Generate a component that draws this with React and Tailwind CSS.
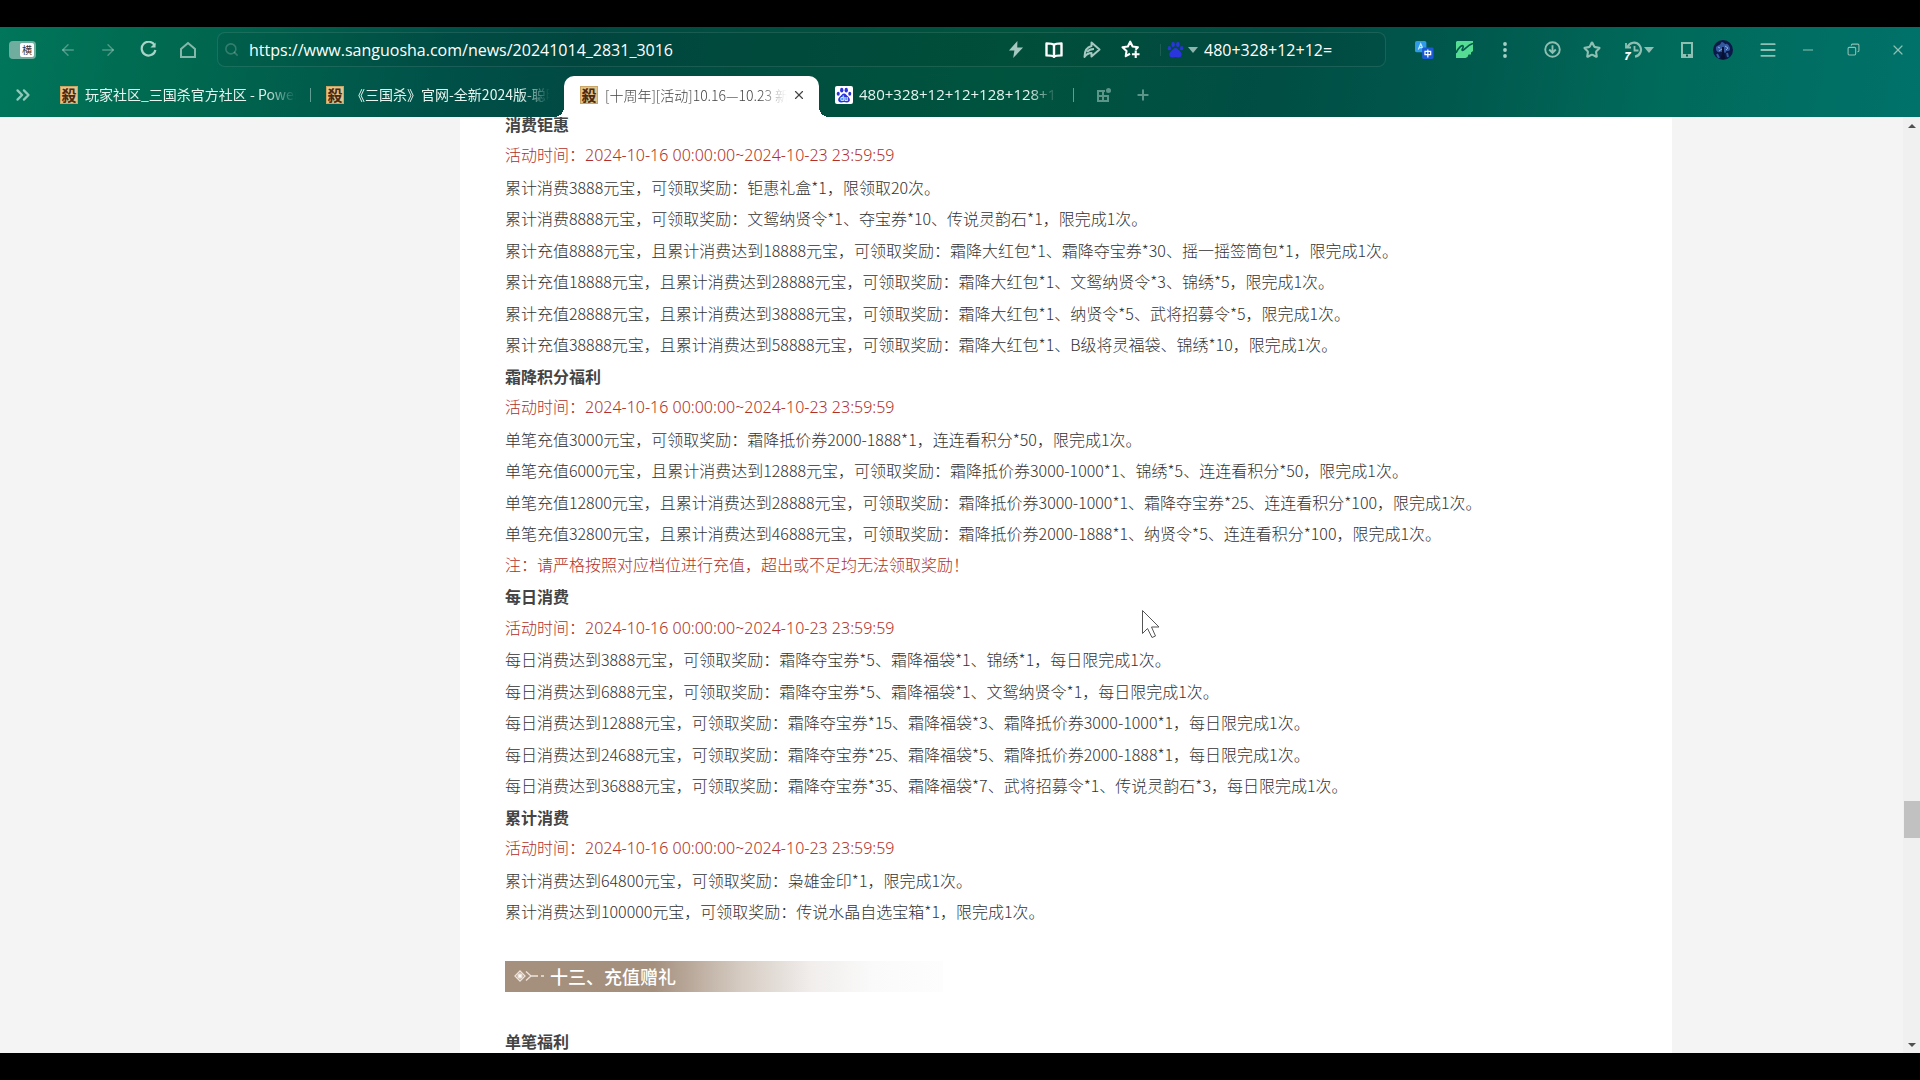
import { ArrowLeft, ArrowRight, ChevronsRight, Copy, Menu, Minus, Plus, Search, Star, X } from 'lucide-react';
import clsx from 'clsx';

const TIME = '活动时间：2024-10-16 00:00:00~2024-10-23 23:59:59';

const lines = [
  { type: 'title', text: '消费钜惠' },
  { type: 'red', text: TIME },
  { text: '累计消费3888元宝，可领取奖励：钜惠礼盒*1，限领取20次。' },
  { text: '累计消费8888元宝，可领取奖励：文鸳纳贤令*1、夺宝券*10、传说灵韵石*1，限完成1次。' },
  { text: '累计充值8888元宝，且累计消费达到18888元宝，可领取奖励：霜降大红包*1、霜降夺宝券*30、摇一摇签筒包*1，限完成1次。' },
  { text: '累计充值18888元宝，且累计消费达到28888元宝，可领取奖励：霜降大红包*1、文鸳纳贤令*3、锦绣*5，限完成1次。' },
  { text: '累计充值28888元宝，且累计消费达到38888元宝，可领取奖励：霜降大红包*1、纳贤令*5、武将招募令*5，限完成1次。' },
  { text: '累计充值38888元宝，且累计消费达到58888元宝，可领取奖励：霜降大红包*1、B级将灵福袋、锦绣*10，限完成1次。' },
  { type: 'title', text: '霜降积分福利' },
  { type: 'red', text: TIME },
  { text: '单笔充值3000元宝，可领取奖励：霜降抵价券2000-1888*1，连连看积分*50，限完成1次。' },
  { text: '单笔充值6000元宝，且累计消费达到12888元宝，可领取奖励：霜降抵价券3000-1000*1、锦绣*5、连连看积分*50，限完成1次。' },
  { text: '单笔充值12800元宝，且累计消费达到28888元宝，可领取奖励：霜降抵价券3000-1000*1、霜降夺宝券*25、连连看积分*100，限完成1次。' },
  { text: '单笔充值32800元宝，且累计消费达到46888元宝，可领取奖励：霜降抵价券2000-1888*1、纳贤令*5、连连看积分*100，限完成1次。' },
  { type: 'red', text: '注：请严格按照对应档位进行充值，超出或不足均无法领取奖励！' },
  { type: 'title', text: '每日消费' },
  { type: 'red', text: TIME },
  { text: '每日消费达到3888元宝，可领取奖励：霜降夺宝券*5、霜降福袋*1、锦绣*1，每日限完成1次。' },
  { text: '每日消费达到6888元宝，可领取奖励：霜降夺宝券*5、霜降福袋*1、文鸳纳贤令*1，每日限完成1次。' },
  { text: '每日消费达到12888元宝，可领取奖励：霜降夺宝券*15、霜降福袋*3、霜降抵价券3000-1000*1，每日限完成1次。' },
  { text: '每日消费达到24688元宝，可领取奖励：霜降夺宝券*25、霜降福袋*5、霜降抵价券2000-1888*1，每日限完成1次。' },
  { text: '每日消费达到36888元宝，可领取奖励：霜降夺宝券*35、霜降福袋*7、武将招募令*1、传说灵韵石*3，每日限完成1次。' },
  { type: 'title', text: '累计消费' },
  { type: 'red', text: TIME },
  { text: '累计消费达到64800元宝，可领取奖励：枭雄金印*1，限完成1次。' },
  { text: '累计消费达到100000元宝，可领取奖励：传说水晶自选宝箱*1，限完成1次。' },
];

const lineStyles = {
  title: 'font-bold text-[#444]',
  red: "font-['Noto_Sans','Noto_Sans_CJK_SC',sans-serif] font-light text-[#b03028]",
  body: 'font-light text-[#333]',
};

function IconButton({ label, className = 'w-10', children }) {
  return (
    <button aria-label={label} className={clsx('flex h-8 shrink-0 items-center justify-center', className)}>
      {children}
    </button>
  );
}

function Caret() {
  return (
    <svg viewBox="0 0 10 6" className="h-[6px] w-[10px]" fill="currentColor">
      <path d="M0 0h10L5 6z" />
    </svg>
  );
}

function Paw({ className, text }) {
  return (
    <svg viewBox="0 0 20 20" className={className} fill="currentColor">
      <ellipse cx="7.2" cy="4" rx="2.1" ry="3" />
      <ellipse cx="12.8" cy="4" rx="2.1" ry="3" />
      <ellipse cx="2.8" cy="8.4" rx="1.9" ry="2.6" />
      <ellipse cx="17.2" cy="8.4" rx="1.9" ry="2.6" />
      <path d="M10 8.2c2 0 2.8 1.5 4 2.8 1.3 1.3 3.3 2.6 3.3 5 0 2.3-1.7 3.3-3.6 3.3-1.4 0-2.3-.4-3.7-.4s-2.3.4-3.7.4c-1.9 0-3.6-1-3.6-3.3 0-2.4 2-3.7 3.3-5C7.2 9.7 8 8.2 10 8.2z" />
      {text && (
        <text x="10" y="17.5" textAnchor="middle" fontSize="8" fontWeight="700" fill="#fff">
          du
        </text>
      )}
    </svg>
  );
}

function ShaIcon() {
  return (
    <span className="flex size-[18px] shrink-0 items-center justify-center border border-[#c9a566] bg-[#e2c389] text-[15px] leading-none font-bold text-[#4a2a10]">
      殺
    </span>
  );
}

function BaiduIcon() {
  return (
    <span className="flex size-[18px] shrink-0 items-center justify-center rounded-xs bg-white text-[#2b32dc]">
      <Paw className="size-4" text />
    </span>
  );
}

function TabLabel({ className = 'pb-[2px]', children }) {
  return (
    <span
      className={clsx(
        'min-w-0 flex-1 overflow-hidden text-left whitespace-nowrap [mask-image:linear-gradient(to_right,#000_85%,transparent)]',
        className,
      )}
    >
      {children}
    </span>
  );
}

function AddressBar() {
  return (
    <div className="ml-[9px] flex h-[35px] min-w-0 flex-1 items-center rounded-lg border border-white/10 bg-black/5">
      <Search className="ml-[6px] size-[15px] shrink-0 text-white/20" strokeWidth={2.5} />
      <input
        aria-label="地址"
        defaultValue="https://www.sanguosha.com/news/20241014_2831_3016"
        className="ml-[10px] h-8 min-w-0 flex-1 bg-transparent font-['Open_Sans','Noto_Sans_CJK_SC',sans-serif] text-base font-medium text-white outline-none"
      />
      <IconButton label="极速" className="w-[38px] text-[#a5c8c0]">
        <svg viewBox="0 0 16 18" className="h-[17px] w-[16px]" fill="currentColor">
          <path d="M9.5 0L.5 10h5.8L5 18l10.5-11H9.3z" />
        </svg>
      </IconButton>
      <IconButton label="阅读模式" className="w-[38px] text-white">
        <svg viewBox="0 0 18 16" className="h-4 w-[18px]" fill="none" stroke="currentColor" strokeWidth="2.4" strokeLinejoin="round">
          <path d="M9 3C7.5 1.5 5 1.4 1.5 1.4v12C5 13.4 7.5 13.4 9 14.8c1.5-1.4 4-1.4 7.5-1.4v-12C13 1.4 10.5 1.5 9 3zM9 3v11.5" />
        </svg>
      </IconButton>
      <IconButton label="分享" className="w-[38px] text-[#a5c8c0]">
        <svg viewBox="0 0 18 18" className="size-[18px]" fill="none" stroke="currentColor" strokeWidth="2" strokeLinejoin="round">
          <path d="M8.5 5V1.5L16.5 8.5 8.5 15.5V12C5 12 3.5 13 1.5 16 1.5 10 4 6 8.5 5z" />
          <path d="M4 11c2-2.5 4-3 7-3" />
        </svg>
      </IconButton>
      <IconButton label="收藏" className="w-[38px] text-white">
        <svg viewBox="0 0 20 20" className="size-[19px]" fill="none" stroke="currentColor" strokeWidth="2.2">
          <path d="M9.5 14.5l-4.5 2.5.8-5.3L1.6 7.6l5.6-.8L9.7 1.8l2.5 5 5.6.8-2.6 2.6" strokeLinejoin="round" />
          <path d="M15.5 11v8M11.5 15h8" />
        </svg>
      </IconButton>
      <span className="ml-[11px] h-3 w-px bg-white/10" />
      <button aria-label="搜索引擎" className="flex w-[43px] shrink-0 items-center justify-center gap-1 text-[#8bb5ad]">
        <Paw className="size-[17px] text-[#2a35dd]" />
        <Caret />
      </button>
      <input
        aria-label="搜索"
        defaultValue="480+328+12+12="
        className="h-8 w-[181px] bg-transparent font-['Open_Sans','Noto_Sans_CJK_SC',sans-serif] text-base font-medium text-white outline-none"
      />
    </div>
  );
}

function Toolbar() {
  return (
    <div className="flex h-[45px] items-center text-[#8fbfb3]">
      <button className="ml-[9px] flex h-[18px] w-[27px] shrink-0 items-center justify-end rounded-sm bg-[#6fae9f] p-[2px]">
        <span className="flex h-[14px] w-[14px] items-center justify-center rounded-xs bg-white text-[10px] leading-none text-[#333]">
          横
        </span>
      </button>
      <div className="ml-[12px] flex">
        <IconButton label="后退">
          <ArrowLeft className="size-[18px] text-white/30" />
        </IconButton>
        <IconButton label="前进">
          <ArrowRight className="size-[18px] text-white/30" />
        </IconButton>
        <IconButton label="刷新">
          <svg viewBox="0 0 18 18" className="size-[17px]" fill="none" stroke="#a8d3c8" strokeWidth="2.3">
            <path d="M15.5 4.5A7.3 7.3 0 1 0 16.3 9.5" />
            <path d="M16.5 1.5V7H11z" fill="#a8d3c8" stroke="none" />
          </svg>
        </IconButton>
        <IconButton label="主页">
          <svg viewBox="0 0 18 18" className="size-[18px]" fill="none" stroke="#85b8ab" strokeWidth="2">
            <path d="M2 8L9 2l7 6v8H2z" />
          </svg>
        </IconButton>
      </div>

      <AddressBar />

      <div className="mr-[2px] ml-[18px] flex shrink-0 items-center">
        <IconButton label="翻译">
          <svg viewBox="0 0 20 20" className="size-[19px]">
            <rect x="0" y="1" width="12" height="12" rx="2" fill="#2f9be8" />
            <path d="M3.5 10L6 4l2 4.5M4.5 8h3" stroke="#c8e8ff" strokeWidth="1.3" fill="none" />
            <rect x="7.5" y="8" width="12" height="12" rx="1.5" fill="#1d5bd6" />
            <path d="M10.5 12h6v3.5h-6zM13.5 10v8.5" stroke="#fff" strokeWidth="1.3" fill="none" />
          </svg>
        </IconButton>
        <IconButton label="扩展">
          <svg viewBox="0 0 17 17" className="size-[17px]">
            <path d="M1 0h16v10l-2 1.5v2h-2.5L11.5 16l-2 1H0V1z" fill="#55de93" />
            <path d="M0 12C2 7 6 3.5 7 5s-2 4-.5 4.5S11 4 17 2.5" stroke="#00594d" strokeWidth="1.6" fill="none" />
          </svg>
        </IconButton>
        <IconButton label="更多" className="w-[42px]">
          <svg viewBox="0 0 4 16" className="h-4 w-1" fill="#a5d0c6">
            <circle cx="2" cy="2" r="1.9" />
            <circle cx="2" cy="8" r="1.9" />
            <circle cx="2" cy="14" r="1.9" />
          </svg>
        </IconButton>
        <IconButton label="下载" className="ml-[6px] w-10">
          <svg viewBox="0 0 18 18" className="size-[17px]" fill="none" stroke="currentColor" strokeWidth="2">
            <circle cx="9" cy="9" r="7.7" />
            <path d="M9 4.5v8M5.5 9L9 12.5 12.5 9" />
          </svg>
        </IconButton>
        <IconButton label="收藏夹">
          <Star className="size-[18px]" strokeWidth={2.8} strokeLinejoin="miter" />
        </IconButton>
        <button aria-label="历史记录" className="flex w-[52px] shrink-0 items-center justify-center gap-px">
          <svg viewBox="0 0 20 20" className="size-[20px]" fill="none" stroke="currentColor" strokeWidth="2.2">
            <path d="M4.5 7a7 7 0 1 1 7.5 9.6" />
            <path d="M3 3v4.5h5M11.5 6v4.5h4" strokeWidth="1.8" />
            <text x="0" y="20" fontSize="11" fontWeight="900" fontStyle="italic" fill="#fff" stroke="none">
              7
            </text>
          </svg>
          <Caret />
        </button>
        <IconButton label="手机" className="ml-[5px] w-9">
          <svg viewBox="0 0 12 16" className="h-4 w-3" fill="none" stroke="currentColor" strokeWidth="2">
            <path d="M1 1h10v14H1z" />
            <path d="M1 13.5h10" strokeWidth="3" />
            <path d="M5 13.5h2" stroke="#00594d" />
          </svg>
        </IconButton>
        <IconButton label="账户" className="w-9">
          <svg viewBox="0 0 20 20" className="size-5 rounded-full">
            <rect width="20" height="20" fill="#0b1a48" />
            <path d="M3 9C2 5 7 6 8 3s4 2 5 1 4 2 4 5-4 1-4 3-4-1-6 0-4-1-4-3z" fill="#335a9e" />
            <path d="M5 7l2 1M12 6l3 2M6 11l3-2M13 10l2-2" stroke="#86a9dc" />
            <path d="M9 7h2v6l1.5 6h-5L9 14z" fill="#081033" />
            <path d="M4 14l2 4M14 13l1 4" stroke="#2d62a4" strokeWidth="2" />
          </svg>
        </IconButton>
        <IconButton label="菜单" className="ml-[7px] w-10">
          <Menu className="size-[20px]" strokeWidth={2.2} />
        </IconButton>
        <IconButton label="最小化">
          <Minus className="size-4" strokeWidth={1.5} />
        </IconButton>
        <IconButton label="还原" className="ml-[5px] w-10">
          <Copy className="size-[13px] rotate-90" strokeWidth={2} />
        </IconButton>
        <IconButton label="关闭" className="ml-[5px] w-10">
          <X className="size-[16px]" strokeWidth={1.8} />
        </IconButton>
      </div>
    </div>
  );
}

function TabStrip() {
  return (
    <nav className="flex h-[45px] items-end text-sm text-[#e6f5f0]">
      <IconButton label="展开标签" className="h-[45px] w-[46px]">
        <ChevronsRight className="size-[22px] text-[#8fc9ba]" strokeWidth={2.5} />
      </IconButton>
      <button className="ml-[14px] flex h-[45px] w-[236px] items-center gap-[7px]">
        <ShaIcon />
        <TabLabel>玩家社区_三国杀官方社区 - Power</TabLabel>
      </button>
      <span className="mb-[15px] ml-[14px] h-[14px] w-px bg-[#5f9f92]" />
      <button className="ml-[15px] flex h-[45px] w-[224px] items-center gap-[7px]">
        <ShaIcon />
        <TabLabel>《三国杀》官网-全新2024版-聪明</TabLabel>
      </button>
      {/* active tab, with flared bottom corners */}
      <div className="relative ml-[14px] flex h-[41px] w-[255px] items-center rounded-t-[10px] bg-white pb-1 pl-4 text-[#444] before:absolute before:bottom-0 before:-left-[10px] before:size-[10px] before:bg-[radial-gradient(circle_at_0_0,transparent_10px,#fff_10px)] after:absolute after:-right-[10px] after:bottom-0 after:size-[10px] after:bg-[radial-gradient(circle_at_100%_0,transparent_10px,#fff_10px)]">
        <button className="flex h-full min-w-0 flex-1 items-center gap-[7px]">
          <ShaIcon />
          <TabLabel className="font-light">[十周年][活动]10.16—10.23 新</TabLabel>
        </button>
        <IconButton label="关闭标签" className="mr-2 w-6">
          <X className="size-[14px]" strokeWidth={2} />
        </IconButton>
      </div>
      <button className="ml-4 flex h-[45px] w-[223px] items-center gap-[6px]">
        <BaiduIcon />
        <TabLabel className="font-['Open_Sans',sans-serif] text-[15px] font-medium">480+328+12+12+128+128+1</TabLabel>
      </button>
      <span className="mb-[15px] ml-[15px] h-[14px] w-px bg-[#5f9f92]" />
      <IconButton label="标签组" className="ml-[10px] h-[45px] w-10">
        <svg viewBox="0 0 14 14" className="size-[14px] text-[#5b9689]" fill="none" stroke="currentColor" strokeWidth="2">
          <path d="M8 3H1v10h10V7M1 8h10M6 3v10" />
          <circle cx="11.5" cy="2.5" r="2.5" fill="currentColor" stroke="none" />
        </svg>
      </IconButton>
      <IconButton label="新建标签" className="h-[45px] w-[38px]">
        <Plus className="size-4 text-[#5b9689]" strokeWidth={3} />
      </IconButton>
    </nav>
  );
}

function Banner() {
  return (
    <h2 className="mt-[34px] flex h-[31px] w-[438px] items-center gap-[5px] bg-[linear-gradient(to_right,#a5907e_0%,#a5907e_34%,#d6ccc3_54%,#f1eeec_70%,#fafafa_84%,#fdfdfd_100%)] pb-[2px] pl-[9px] text-lg font-medium text-white">
      <svg viewBox="0 0 31 12" className="h-3 w-[31px]" fill="none" stroke="#eee3da" strokeWidth="1.3">
        <path d="M6 1l5 5-5 5-5-5z" />
        <circle cx="6" cy="6" r="2" fill="#fff" />
        <path d="M12 1.5L17 6l-5 4.5M17 6h7M27 6h3" />
      </svg>
      十三、充值赠礼
    </h2>
  );
}

function Scrollbar() {
  return (
    <div className="flex w-[17px] shrink-0 flex-col bg-[#f0f0f0] text-[#505050]">
      <button aria-label="向上滚动" className="flex h-[17px] items-center justify-center">
        <svg viewBox="0 0 8 4" className="h-1 w-2" fill="currentColor">
          <path d="M0 4h8L4 0z" />
        </svg>
      </button>
      <div className="grow-[667]" />
      <div className="ml-px h-[37px] bg-[#c1c1c1]" />
      <div className="grow-[198]" />
      <button aria-label="向下滚动" className="flex h-[17px] items-center justify-center">
        <svg viewBox="0 0 8 4" className="h-1 w-2" fill="currentColor">
          <path d="M0 0h8L4 4z" />
        </svg>
      </button>
    </div>
  );
}

function Cursor() {
  return (
    <svg viewBox="0 0 18 29" className="absolute top-[493px] left-[682px] h-[29px] w-[18px]" fill="#fff" stroke="#555">
      <path d="M.5.5v23l5-5 4.5 9 3.5-1.5-4-9h7.5z" />
    </svg>
  );
}

export default function App() {
  return (
    <div className="flex h-screen flex-col overflow-hidden bg-black py-[27px] font-['Noto_Sans_CJK_SC',sans-serif]">
      <header className="shrink-0 bg-[linear-gradient(100deg,#00765a_0%,#00684f_10%,#005048_24%,#004a43_30%,#00503f_44%,#00543e_52%,#004e44_66%,#00574c_75%,#006a5a_86%,#00726a_100%)]">
        <Toolbar />
        <TabStrip />
      </header>
      <div className="flex min-h-0 flex-1 bg-[#f4f4f4]">
        <main className="relative mr-[231px] ml-[460px] min-w-0 flex-1 overflow-hidden bg-white px-[45px]">
          <article className="-mt-[9px] text-base whitespace-nowrap">
            {lines.map((line, i) => (
              <p key={i} className={clsx('leading-8 even:leading-[31px]', lineStyles[line.type || 'body'])}>
                {line.text}
              </p>
            ))}
            <Banner />
            <p className="mt-[33px] leading-8 font-bold text-[#444]">单笔福利</p>
          </article>
          <Cursor />
        </main>
        <Scrollbar />
      </div>
    </div>
  );
}
